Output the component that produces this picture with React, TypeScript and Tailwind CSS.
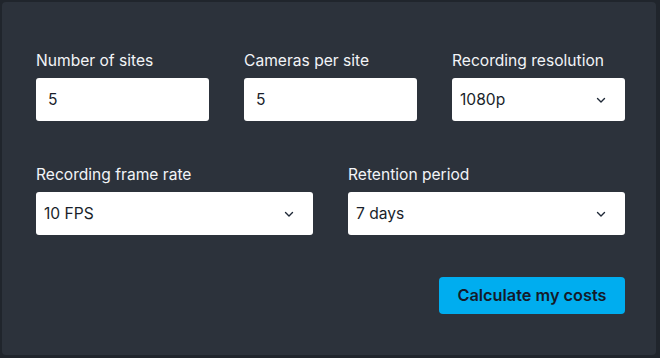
import React from "react";

const Chevron = () => (
  <svg width="12" height="12" viewBox="0 0 12 12" fill="none" className="text-[#1f2937]">
    <path d="M2.5 4.5 L6 8 L9.5 4.5" stroke="currentColor" strokeWidth="1.4" strokeLinecap="round" strokeLinejoin="round" />
  </svg>
);

const Field = ({ label, value, select, w }: { label: string; value: string; select?: boolean; w: string }) => (
  <div className={`flex flex-col ${w}`}>
    <div className="text-[15.6px] leading-[20px] text-[#f2f4f7] mb-[7px]">{label}</div>
    <div
      className={`h-[43px] bg-white rounded-[3px] flex items-center justify-between pr-[18px] text-[15.6px] text-[#1a1f2b] ${
        select ? "pl-[8px]" : "pl-[12px]"
      }`}
    >
      <span>{value}</span>
      {select && <Chevron />}
    </div>
  </div>
);

export default function App() {
  return (
    <div className="w-[660px] h-[358px] bg-[#20252c] p-[2px] pr-[4px] pb-[3px]" style={{ fontFamily: "Inter, 'Noto Sans', sans-serif" }}>
      <div className="w-full h-full bg-[#2c323b] rounded-[4px] pt-[49px] pl-[34px]">
        <div className="flex gap-[35px]">
          <Field label="Number of sites" value="5" w="w-[173px]" />
          <Field label="Cameras per site" value="5" w="w-[173px]" />
          <Field label="Recording resolution" value="1080p" select w="w-[173px]" />
        </div>
        <div className="flex gap-[35px] mt-[44px]">
          <Field label="Recording frame rate" value="10 FPS" select w="w-[277px]" />
          <Field label="Retention period" value="7 days" select w="w-[277px]" />
        </div>
        <div className="flex w-[589px] justify-end mt-[42px]">
          <button className="w-[186px] h-[37px] bg-[#00adef] rounded-[4px] text-[16.3px] font-semibold text-[#141a2a]">
            Calculate my costs
          </button>
        </div>
      </div>
    </div>
  );
}
